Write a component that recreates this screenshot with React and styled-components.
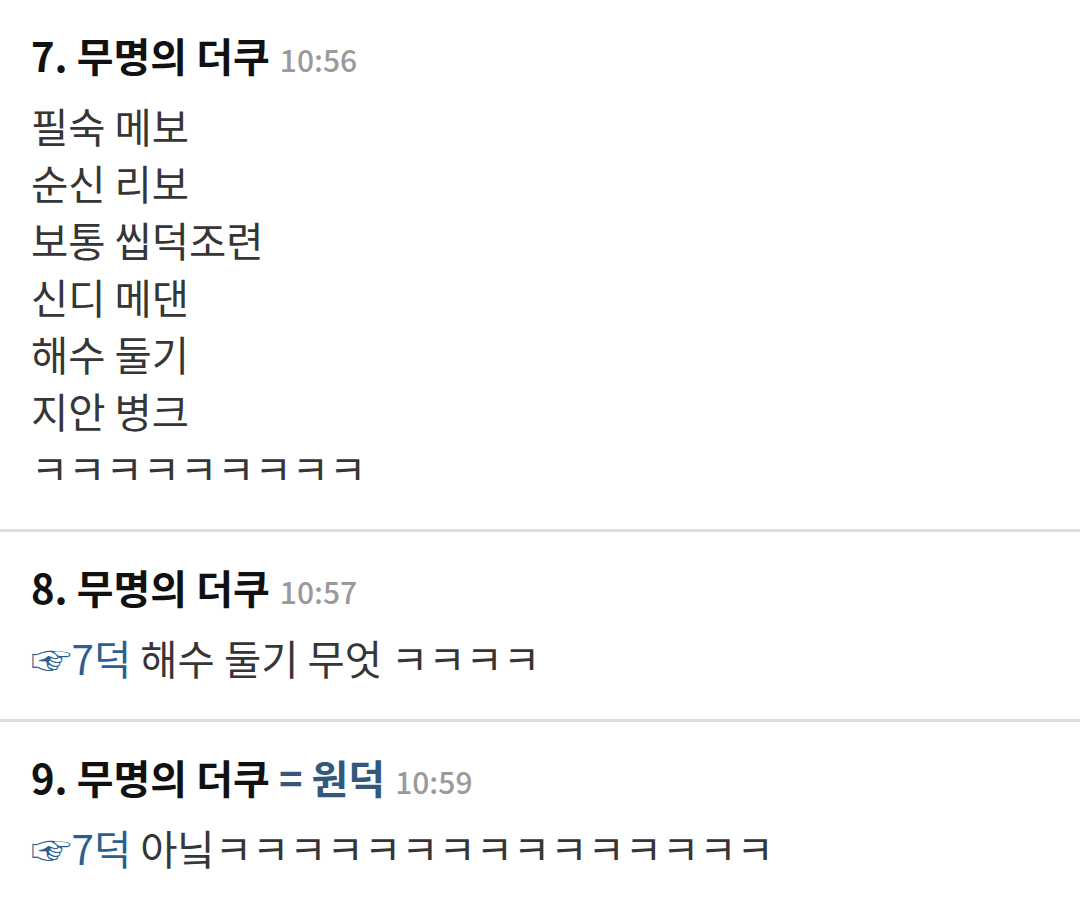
import React from "react";
import styled, { createGlobalStyle } from "styled-components";

const GlobalStyle = createGlobalStyle`
  body {
    margin: 0;
    background: #fff;
    font-family: "Noto Sans CJK KR", "Noto Sans", sans-serif;
  }
`;

const List = styled.div`
  display: flex;
  flex-direction: column;
`;

const Comment = styled.div`
  padding: 27px 31px 33px;
  border-bottom: 3px solid #dddddd;
  &:last-child {
    border-bottom: none;
  }
`;

const Header = styled.div`
  display: flex;
  align-items: baseline;
  gap: 10px;
  font-size: 40px;
  line-height: 57px;
  font-weight: 700;
  color: #111;
  margin-bottom: 9px;
`;

const Nick = styled.span`
  color: #34577c;
`;

const Time = styled.span`
  font-size: 30px;
  font-weight: 500;
  color: #9a9a9a;
`;

const Body = styled.div`
  font-size: 40.5px;
  line-height: 57px;
  color: #363636;
  white-space: pre-wrap;
`;

const Ref = styled.span`
  color: #2b5f91;
`;

const comments = [
  {
    no: 7,
    time: "10:56",
    text: "필숙 메보\n순신 리보\n보통 씹덕조련\n신디 메댄\n해수 둘기\n지안 병크\nㅋㅋㅋㅋㅋㅋㅋㅋㅋ",
  },
  { no: 8, time: "10:57", reply: "☞7덕", text: " 해수 둘기 무엇 ㅋㅋㅋㅋ" },
  {
    no: 9,
    time: "10:59",
    nick: "= 원덕",
    reply: "☞7덕",
    text: " 아닠ㅋㅋㅋㅋㅋㅋㅋㅋㅋㅋㅋㅋㅋㅋㅋ",
  },
];

export default function App() {
  return (
    <>
      <GlobalStyle />
      <List>
        {comments.map((c) => (
          <Comment key={c.no}>
            <Header>
              <span>
                {c.no}. 무명의 더쿠{c.nick && <Nick> {c.nick}</Nick>}
              </span>
              <Time>{c.time}</Time>
            </Header>
            <Body>
              {c.reply && <Ref>{c.reply}</Ref>}
              {c.text}
            </Body>
          </Comment>
        ))}
      </List>
    </>
  );
}
